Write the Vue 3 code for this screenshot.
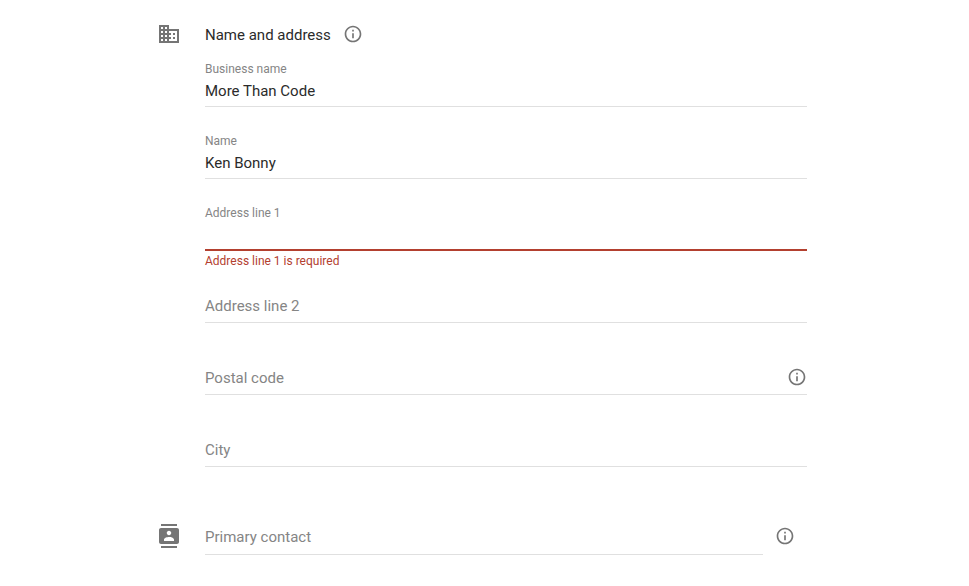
<script setup>
const filled = [
  { label: 'Business name', value: 'More Than Code' },
  { label: 'Name', value: 'Ken Bonny' },
  { label: 'Address line 1', value: '', error: 'Address line 1 is required' },
]
const empty = [
  { label: 'Address line 2' },
  { label: 'Postal code', info: true },
  { label: 'City' },
]
const infoPath = 'M11 17h2v-6h-2v6zm1-15C6.48 2 2 6.48 2 12s4.48 10 10 10 10-4.48 10-10S17.52 2 12 2zm0 18c-4.41 0-8-3.59-8-8s3.59-8 8-8 8 3.59 8 8-3.59 8-8 8zM11 9h2V7h-2v2z'
</script>

<template>
  <main class="page">
    <section class="section">
      <svg class="lead" viewBox="0 0 24 24"><path d="M12 7V3H2v18h20V7H12zM6 19H4v-2h2v2zm0-4H4v-2h2v2zm0-4H4V9h2v2zm0-4H4V5h2v2zm4 12H8v-2h2v2zm0-4H8v-2h2v2zm0-4H8V9h2v2zm0-4H8V5h2v2zm10 12h-8v-2h2v-2h-2v-2h2v-2h-2V9h8v10zm-2-8h-2v2h2v-2zm0 4h-2v2h2v-2z" /></svg>
      <div class="body">
        <header class="heading">
          <h1>Name and address</h1>
          <svg class="info" viewBox="0 0 24 24"><path :d="infoPath" /></svg>
        </header>
        <div v-for="f in filled" :key="f.label" class="field" :class="{ invalid: f.error }">
          <div class="label">{{ f.label }}</div>
          <div class="value">{{ f.value }}</div>
          <div v-if="f.error" class="error">{{ f.error }}</div>
        </div>
        <div v-for="f in empty" :key="f.label" class="blank">
          <span>{{ f.label }}</span>
          <svg v-if="f.info" class="info" viewBox="0 0 24 24"><path :d="infoPath" /></svg>
        </div>
      </div>
    </section>
    <section class="section contact">
      <svg class="lead" viewBox="0 0 24 24"><path d="M20 0H4v2h16V0zM4 24h16v-2H4v2zM20 4H4c-1.1 0-2 .9-2 2v12c0 1.1.9 2 2 2h16c1.1 0 2-.9 2-2V6c0-1.1-.9-2-2-2zm-8 2.75c1.24 0 2.25 1.01 2.25 2.25s-1.01 2.25-2.25 2.25S9.75 10.24 9.75 9 10.76 6.75 12 6.75zM17 17H7v-1.5c0-1.67 3.33-2.5 5-2.5s5 .83 5 2.5V17z" /></svg>
      <div class="body contact-body">
        <div class="blank primary"><span>Primary contact</span></div>
        <svg class="info" viewBox="0 0 24 24"><path :d="infoPath" /></svg>
      </div>
    </section>
  </main>
</template>

<style>
body { margin: 0; background: #fff; }
</style>
<style scoped>
.page {
  box-sizing: border-box;
  height: 586px;
  overflow: hidden;
  padding: 22px 162px 0 157px;
  font-family: Roboto, sans-serif;
  font-size: 15px;
  color: #2b2b2b;
}
.section { display: flex; gap: 24px; }
.lead { width: 24px; height: 24px; flex: none; fill: #757575; }
.body { width: 602px; }
.heading { display: flex; align-items: center; gap: 12px; height: 24px; }
h1 { margin: 0; font-size: 15px; font-weight: 400; line-height: 24px; padding-top: 1px; }
.info { width: 20px; height: 20px; flex: none; fill: #757575; }
.field { box-sizing: border-box; height: 72px; padding-top: 15px; }
.label { font-size: 12px; line-height: 16px; color: #858585; }
.value { box-sizing: border-box; height: 30px; padding-top: 4px; line-height: 20px; border-bottom: 1px solid #e0e0e0; }
.invalid .value { border-bottom: 2px solid #b3402f; }
.error { padding-top: 2px; font-size: 12px; line-height: 16px; color: #b3402f; }
.blank {
  box-sizing: border-box;
  height: 27px;
  margin-bottom: 45px;
  display: flex;
  justify-content: space-between;
  line-height: 20px;
  color: #858585;
  border-bottom: 1px solid #e0e0e0;
}
.blank .info { margin-top: -1px; }
.field + .blank { margin-top: 34px; }
.contact { margin-top: 12px; }
.contact-body { display: flex; gap: 12px; padding-top: 2px; }
.primary { width: 558px; height: 28px; margin: 1px 0 0; }
</style>
